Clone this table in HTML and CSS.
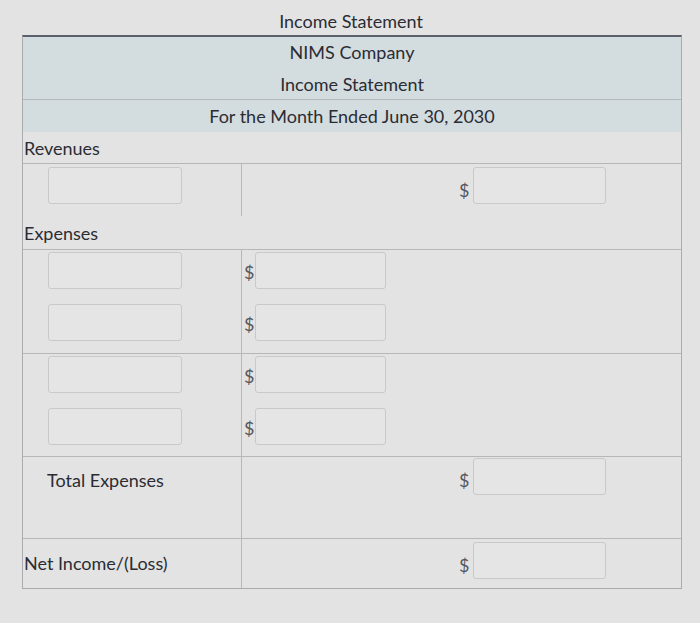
FILE: index.html
```html
<!DOCTYPE html>
<html>
<head>
<meta charset="utf-8">
<link rel="stylesheet" href="styles.css">
</head>
<body>
<div class="page">
  <div class="title">Income Statement</div>
  <div class="sheet">
    <div class="head">
      <div class="head-row head-first">NIMS Company</div>
      <div class="head-row head-mid">Income Statement</div>
      <div class="head-row">For the Month Ended June 30, 2030</div>
    </div>

    <div class="row label-row line-bottom"><div class="label">Revenues</div></div>

    <div class="row grid rev-row">
      <div class="c1"><span class="field wide"></span></div>
      <div class="c2 divided"></div>
      <div class="c3"><span class="dollar">$</span><span class="field right"></span></div>
    </div>

    <div class="row label-row exp-label line-bottom"><div class="label">Expenses</div></div>

    <div class="row grid group line-bottom">
      <div class="c1 stack"><span class="field wide"></span><span class="field wide"></span></div>
      <div class="c2 divided stack">
        <div class="amt"><span class="dollar">$</span><span class="field"></span></div>
        <div class="amt"><span class="dollar">$</span><span class="field"></span></div>
      </div>
      <div class="c3"></div>
    </div>

    <div class="row grid group group-last line-bottom">
      <div class="c1 stack"><span class="field wide"></span><span class="field wide"></span></div>
      <div class="c2 divided stack">
        <div class="amt"><span class="dollar">$</span><span class="field"></span></div>
        <div class="amt"><span class="dollar">$</span><span class="field"></span></div>
      </div>
      <div class="c3"></div>
    </div>

    <div class="row grid total-row line-bottom">
      <div class="c1"><div class="label indent">Total Expenses</div></div>
      <div class="c2 divided"></div>
      <div class="c3"><span class="dollar">$</span><span class="field right"></span></div>
    </div>

    <div class="row grid net-row">
      <div class="c1"><div class="label">Net Income/(Loss)</div></div>
      <div class="c2 divided"></div>
      <div class="c3"><span class="dollar">$</span><span class="field right"></span></div>
    </div>
  </div>
</div>
</body>
</html>
```
FILE: styles.css
```css
html, body {
  margin: 0;
  padding: 0;
}
body {
  background: #e3e3e3;
  font-family: Lato, "Open Sans", sans-serif;
  font-size: 18px;
  color: #2b2c33;
}
.page {
  width: 700px;
  height: 623px;
}
.title {
  height: 35px;
  line-height: 42px;
  text-align: center;
  padding-left: 2px;
  box-sizing: border-box;
}
.sheet {
  margin-left: 22px;
  width: 660px;
  box-sizing: border-box;
  border: 1px solid #a9abae;
  border-top: 2px solid #5c616b;
}
.head {
  background: #d3dcdf;
}
.head-row {
  height: 32px;
  line-height: 32px;
  text-align: center;
  box-sizing: border-box;
}
.head-first {
  height: 31px;
  line-height: 30px;
}
.head-mid {
  border-bottom: 1px solid #b3b9bc;
}
.row {
  box-sizing: border-box;
}
.line-bottom {
  border-bottom: 1px solid #b7b7b7;
}
.label-row {
  height: 32px;
  display: flex;
  align-items: center;
}
.exp-label {
  height: 34px;
}
.label {
  padding-left: 1px;
}
.label.indent {
  padding-left: 24px;
}
.grid {
  display: grid;
  grid-template-columns: 218px 210px 1fr;
}
.divided {
  border-left: 1px solid #b7b7b7;
}
.c1, .c2, .c3 {
  box-sizing: border-box;
}
.c1 {
  padding-left: 25px;
}
.c3 {
  padding-left: 8px;
  display: flex;
  align-items: flex-start;
}
.rev-row {
  height: 52px;
}
.rev-row .c1, .rev-row .c3 {
  padding-top: 3px;
}
.group {
  height: 104px;
}
.group-last {
  height: 103px;
}
.stack {
  display: flex;
  flex-direction: column;
  gap: 15px;
  padding-top: 2px;
}
.c2.stack {
  padding-left: 2px;
}
.amt {
  display: flex;
  align-items: flex-end;
}
.field {
  display: block;
  height: 37px;
  width: 131px;
  box-sizing: border-box;
  border: 1px solid #c9c9c9;
  border-radius: 3px;
  background: #e5e5e5;
}
.field.wide {
  width: 134px;
}
.field.right {
  width: 133px;
}
.dollar {
  color: #55575e;
  width: 11px;
  line-height: 20px;
  margin-top: 13px;
  flex: none;
}
.c3 .dollar {
  width: 14px;
}
.amt .dollar {
  margin-top: 0;
  margin-bottom: 7px;
}
.total-row {
  height: 82px;
}
.total-row .c1 {
  padding-left: 0;
  padding-top: 12px;
}
.total-row .c3 {
  padding-top: 1px;
}
.total-row .dollar {
  margin-top: 12px;
}
.net-row {
  height: 49px;
}
.net-row .c1 {
  padding-left: 0;
  display: flex;
  align-items: center;
  padding-bottom: 1px;
}
.net-row .c3 {
  padding-top: 3px;
}
```
